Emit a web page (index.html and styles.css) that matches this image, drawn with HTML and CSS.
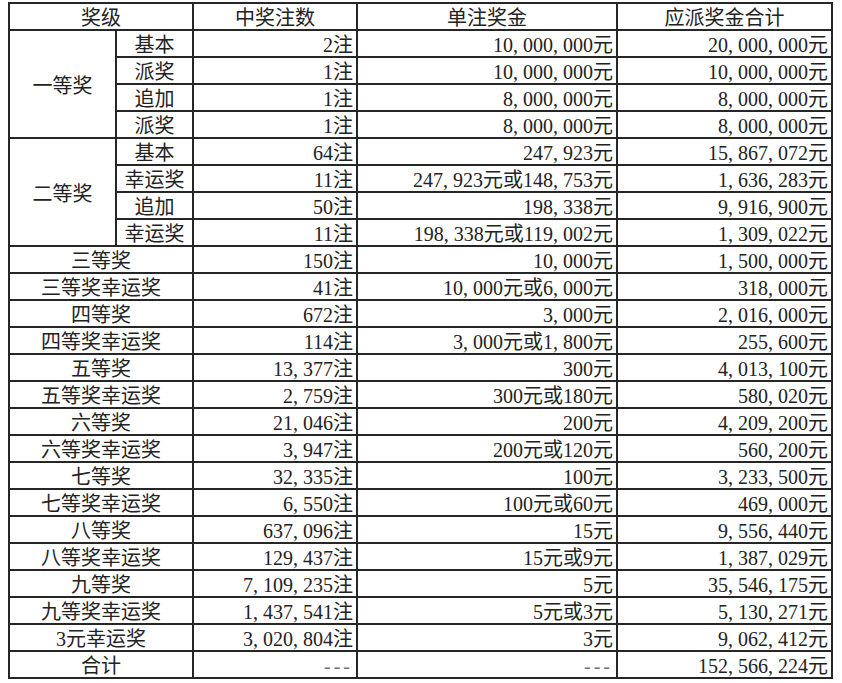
FILE: index.html
```html
<!DOCTYPE html>
<html lang="zh-CN">
<head>
<meta charset="utf-8">
<title>开奖详情</title>
<link rel="stylesheet" href="styles.css">
</head>
<body>
<table class="prize">
  <colgroup>
    <col class="c1"><col class="c2"><col class="c3"><col class="c4"><col class="c5">
  </colgroup>
  <thead>
    <tr class="head">
      <th colspan="2">奖级</th>
      <th>中奖注数</th>
      <th>单注奖金</th>
      <th>应派奖金合计</th>
    </tr>
  </thead>
  <tbody>
    <tr>
      <td class="lbl" rowspan="4">一等奖</td>
      <td class="lbl">基本</td>
      <td class="num">2注</td>
      <td class="num">10<span class="c">,</span>000<span class="c">,</span>000元</td>
      <td class="num">20<span class="c">,</span>000<span class="c">,</span>000元</td>
    </tr>
    <tr>
      <td class="lbl">派奖</td>
      <td class="num">1注</td>
      <td class="num">10<span class="c">,</span>000<span class="c">,</span>000元</td>
      <td class="num">10<span class="c">,</span>000<span class="c">,</span>000元</td>
    </tr>
    <tr>
      <td class="lbl">追加</td>
      <td class="num">1注</td>
      <td class="num">8<span class="c">,</span>000<span class="c">,</span>000元</td>
      <td class="num">8<span class="c">,</span>000<span class="c">,</span>000元</td>
    </tr>
    <tr>
      <td class="lbl">派奖</td>
      <td class="num">1注</td>
      <td class="num">8<span class="c">,</span>000<span class="c">,</span>000元</td>
      <td class="num">8<span class="c">,</span>000<span class="c">,</span>000元</td>
    </tr>
    <tr>
      <td class="lbl" rowspan="4">二等奖</td>
      <td class="lbl">基本</td>
      <td class="num">64注</td>
      <td class="num">247<span class="c">,</span>923元</td>
      <td class="num">15<span class="c">,</span>867<span class="c">,</span>072元</td>
    </tr>
    <tr>
      <td class="lbl">幸运奖</td>
      <td class="num">11注</td>
      <td class="num">247<span class="c">,</span>923元或148<span class="c">,</span>753元</td>
      <td class="num">1<span class="c">,</span>636<span class="c">,</span>283元</td>
    </tr>
    <tr>
      <td class="lbl">追加</td>
      <td class="num">50注</td>
      <td class="num">198<span class="c">,</span>338元</td>
      <td class="num">9<span class="c">,</span>916<span class="c">,</span>900元</td>
    </tr>
    <tr>
      <td class="lbl">幸运奖</td>
      <td class="num">11注</td>
      <td class="num">198<span class="c">,</span>338元或119<span class="c">,</span>002元</td>
      <td class="num">1<span class="c">,</span>309<span class="c">,</span>022元</td>
    </tr>
    <tr>
      <td class="lbl" colspan="2">三等奖</td>
      <td class="num">150注</td>
      <td class="num">10<span class="c">,</span>000元</td>
      <td class="num">1<span class="c">,</span>500<span class="c">,</span>000元</td>
    </tr>
    <tr>
      <td class="lbl" colspan="2">三等奖幸运奖</td>
      <td class="num">41注</td>
      <td class="num">10<span class="c">,</span>000元或6<span class="c">,</span>000元</td>
      <td class="num">318<span class="c">,</span>000元</td>
    </tr>
    <tr>
      <td class="lbl" colspan="2">四等奖</td>
      <td class="num">672注</td>
      <td class="num">3<span class="c">,</span>000元</td>
      <td class="num">2<span class="c">,</span>016<span class="c">,</span>000元</td>
    </tr>
    <tr>
      <td class="lbl" colspan="2">四等奖幸运奖</td>
      <td class="num">114注</td>
      <td class="num">3<span class="c">,</span>000元或1<span class="c">,</span>800元</td>
      <td class="num">255<span class="c">,</span>600元</td>
    </tr>
    <tr>
      <td class="lbl" colspan="2">五等奖</td>
      <td class="num">13<span class="c">,</span>377注</td>
      <td class="num">300元</td>
      <td class="num">4<span class="c">,</span>013<span class="c">,</span>100元</td>
    </tr>
    <tr>
      <td class="lbl" colspan="2">五等奖幸运奖</td>
      <td class="num">2<span class="c">,</span>759注</td>
      <td class="num">300元或180元</td>
      <td class="num">580<span class="c">,</span>020元</td>
    </tr>
    <tr>
      <td class="lbl" colspan="2">六等奖</td>
      <td class="num">21<span class="c">,</span>046注</td>
      <td class="num">200元</td>
      <td class="num">4<span class="c">,</span>209<span class="c">,</span>200元</td>
    </tr>
    <tr>
      <td class="lbl" colspan="2">六等奖幸运奖</td>
      <td class="num">3<span class="c">,</span>947注</td>
      <td class="num">200元或120元</td>
      <td class="num">560<span class="c">,</span>200元</td>
    </tr>
    <tr>
      <td class="lbl" colspan="2">七等奖</td>
      <td class="num">32<span class="c">,</span>335注</td>
      <td class="num">100元</td>
      <td class="num">3<span class="c">,</span>233<span class="c">,</span>500元</td>
    </tr>
    <tr>
      <td class="lbl" colspan="2">七等奖幸运奖</td>
      <td class="num">6<span class="c">,</span>550注</td>
      <td class="num">100元或60元</td>
      <td class="num">469<span class="c">,</span>000元</td>
    </tr>
    <tr>
      <td class="lbl" colspan="2">八等奖</td>
      <td class="num">637<span class="c">,</span>096注</td>
      <td class="num">15元</td>
      <td class="num">9<span class="c">,</span>556<span class="c">,</span>440元</td>
    </tr>
    <tr>
      <td class="lbl" colspan="2">八等奖幸运奖</td>
      <td class="num">129<span class="c">,</span>437注</td>
      <td class="num">15元或9元</td>
      <td class="num">1<span class="c">,</span>387<span class="c">,</span>029元</td>
    </tr>
    <tr>
      <td class="lbl" colspan="2">九等奖</td>
      <td class="num">7<span class="c">,</span>109<span class="c">,</span>235注</td>
      <td class="num">5元</td>
      <td class="num">35<span class="c">,</span>546<span class="c">,</span>175元</td>
    </tr>
    <tr>
      <td class="lbl" colspan="2">九等奖幸运奖</td>
      <td class="num">1<span class="c">,</span>437<span class="c">,</span>541注</td>
      <td class="num">5元或3元</td>
      <td class="num">5<span class="c">,</span>130<span class="c">,</span>271元</td>
    </tr>
    <tr>
      <td class="lbl" colspan="2">3元幸运奖</td>
      <td class="num">3<span class="c">,</span>020<span class="c">,</span>804注</td>
      <td class="num">3元</td>
      <td class="num">9<span class="c">,</span>062<span class="c">,</span>412元</td>
    </tr>
    <tr>
      <td class="lbl" colspan="2">合计</td>
      <td class="num dash">---</td>
      <td class="num dash">---</td>
      <td class="num">152<span class="c">,</span>566<span class="c">,</span>224元</td>
    </tr>
  </tbody>
</table>
</body>
</html>
```

FILE: styles.css
```css
html, body {
  margin: 0;
  padding: 0;
  background: #ffffff;
}

.prize {
  margin: 2px 0 0 8px;
  width: 825px;
  table-layout: fixed;
  border-collapse: collapse;
  font-family: "Liberation Serif", "Noto Sans CJK SC", serif;
  font-size: 20px;
  line-height: 20px;
  color: #222222;
}

.c1 { width: 107px; }
.c2 { width: 77px; }
.c3 { width: 164px; }
.c4 { width: 260px; }
.c5 { width: 215px; }

.prize th,
.prize td {
  border: 2px solid #262626;
  padding: 4px 3px 0 3px;
  vertical-align: middle;
  white-space: nowrap;
  overflow: hidden;
}

.prize th {
  font-weight: normal;
  text-align: center;
}

.head {
  height: 26.5px;
}

.prize tbody tr {
  height: 27px;
}

.lbl {
  text-align: center;
}

.num {
  text-align: right;
}

.c {
  padding-right: 5px;
}

.dash {
  color: #777777;
  letter-spacing: 3px;
}
```
